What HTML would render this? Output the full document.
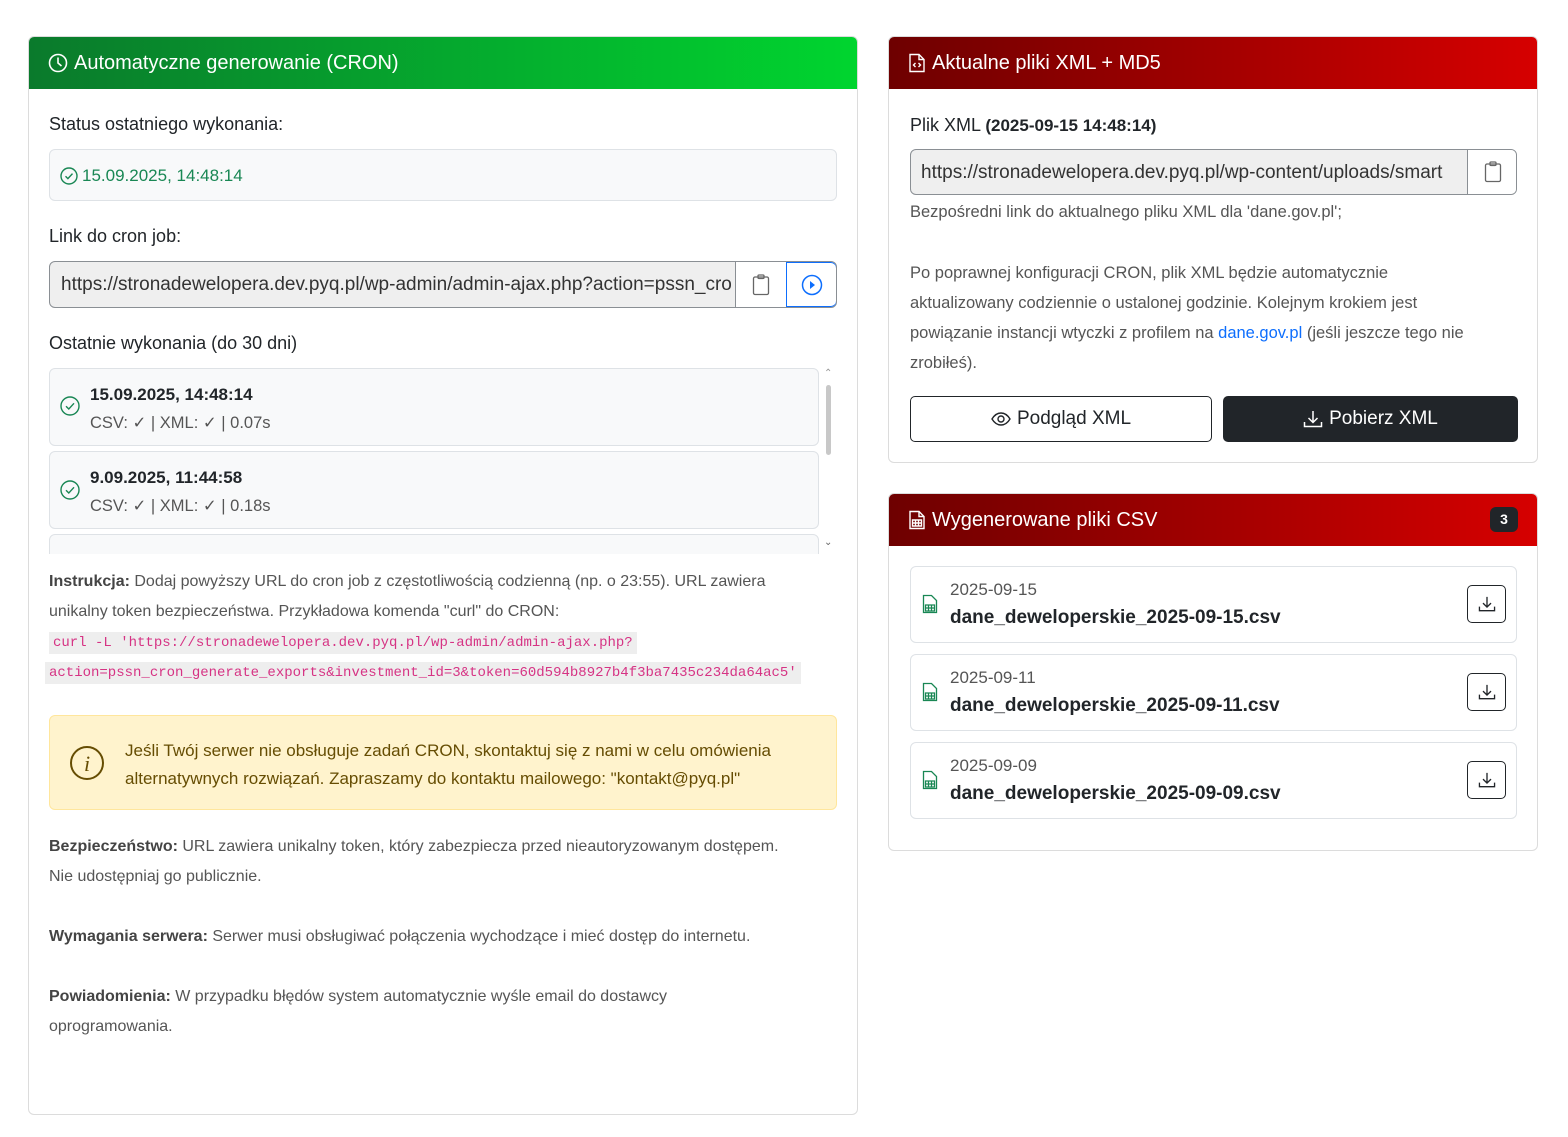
<!DOCTYPE html>
<html><head><meta charset="utf-8"><style>
*{box-sizing:border-box;margin:0;padding:0}
body{width:1568px;height:1137px;background:#fff;font-family:"Liberation Sans",sans-serif;color:#212529;position:relative;overflow:hidden}
.a{position:absolute;white-space:nowrap}
.card{position:absolute;border:1px solid #dcdcdc;border-radius:6px;background:#fff;overflow:hidden}
.hdr{position:absolute;left:0;top:0;right:0;height:52px;color:#fff;font-size:20px;display:flex;align-items:center;padding-left:19px;gap:6px}
.g{background:linear-gradient(90deg,#0a7a2c,#00d52f)}
.r{background:linear-gradient(90deg,#6e0000,#d60000)}
.box{position:absolute;border:1px solid #dee2e6;border-radius:6px;background:#f8f9fa}
.t18{font-size:18px}
.muted{color:#555;font-size:16px}
code{font-family:"Liberation Mono",monospace;color:#d63384;background:#eee;font-size:14px;padding:3px 4px}
.btn{position:absolute;border:1px solid #212529;border-radius:5px;display:flex;align-items:center;justify-content:center;font-size:19px;gap:6px}
</style></head><body>

<!-- LEFT CARD -->
<div class="card" style="left:28px;top:36px;width:830px;height:1079px">
 <div class="hdr g"><svg width="20" height="20" viewBox="0 0 20 20" fill="none" stroke="#fff" stroke-width="1.6"><circle cx="10" cy="10" r="8.5"/><path d="M10 4.5V10l3.5 3"/></svg>Automatyczne generowanie (CRON)</div>
 <div class="a t18" style="left:20px;top:77px">Status ostatniego wykonania:</div>
 <div class="box" style="left:20px;top:112px;width:788px;height:52px"></div>
 <div class="a" style="left:31px;top:129px;color:#198754;font-size:17px;display:flex;align-items:center;gap:4px"><svg width="18" height="18" viewBox="0 0 18 18" fill="none" stroke="#198754" stroke-width="1.4"><circle cx="9" cy="9" r="8"/><path d="M5.5 9.2l2.4 2.4 4.6-5"/></svg>15.09.2025, 14:48:14</div>
 <div class="a t18" style="left:20px;top:189px">Link do cron job:</div>
 <div style="position:absolute;left:20px;top:224px;width:788px;height:47px;border:1px solid #8a8f94;border-radius:6px;background:#efefef;overflow:hidden">
  <div class="a" style="left:11px;top:12px;font-size:19px;color:#333;width:672px;overflow:hidden">https://stronadewelopera.dev.pyq.pl/wp-admin/admin-ajax.php?action=pssn_cron</div>
  <div style="position:absolute;left:685px;top:0;width:51px;height:45px;background:#fff;border-left:1px solid #8a8f94;display:flex;align-items:center;justify-content:center"><svg width="18" height="22" viewBox="0 0 18 22" fill="none" stroke="#666" stroke-width="1.3"><rect x="1.5" y="3" width="15" height="17.5" rx="1.5"/><rect x="6" y="1" width="6" height="3.5" rx="1"/></svg></div>
  <div style="position:absolute;left:736px;top:0;width:51px;height:45px;background:#fff;border:1px solid #0d6efd;border-radius:0 6px 6px 0;display:flex;align-items:center;justify-content:center"><svg width="22" height="22" viewBox="0 0 22 22"><circle cx="11" cy="11" r="9.5" fill="none" stroke="#0d6efd" stroke-width="1.5"/><path d="M9 7l5 4-5 4z" fill="#0d6efd"/></svg></div>
 </div>
 <div class="a t18" style="left:20px;top:296px">Ostatnie wykonania (do 30 dni)</div>
 <div style="position:absolute;left:20px;top:330px;width:790px;height:187px;overflow:hidden">
  <div class="box" style="left:0;top:1px;width:770px;height:78px"></div>
  <div class="box" style="left:0;top:84px;width:770px;height:78px"></div>
  <div class="box" style="left:0;top:167px;width:770px;height:78px"></div>
 </div>
 <div style="position:absolute;left:797px;top:348px;width:5px;height:70px;background:#c8c8c8;border-radius:3px"></div>
 <div class="a" style="left:795px;top:331px;font-size:10px;color:#999">&#8963;</div>
 <div class="a" style="left:795px;top:500px;font-size:10px;color:#666">&#8964;</div>
 <svg class="a" style="left:31px;top:359px" width="20" height="20" viewBox="0 0 20 20" fill="none" stroke="#198754" stroke-width="1.4"><circle cx="10" cy="10" r="9"/><path d="M6 10.2l2.8 2.8 5.2-5.7"/></svg>
 <div class="a" style="left:61px;top:348px;font-size:17px;font-weight:bold">15.09.2025, 14:48:14</div>
 <div class="a muted" style="left:61px;top:376px;font-size:16.5px">CSV: ✓ | XML: ✓ | 0.07s</div>
 <svg class="a" style="left:31px;top:443px" width="20" height="20" viewBox="0 0 20 20" fill="none" stroke="#198754" stroke-width="1.4"><circle cx="10" cy="10" r="9"/><path d="M6 10.2l2.8 2.8 5.2-5.7"/></svg>
 <div class="a" style="left:61px;top:431px;font-size:17px;font-weight:bold">9.09.2025, 11:44:58</div>
 <div class="a muted" style="left:61px;top:459px;font-size:16.5px">CSV: ✓ | XML: ✓ | 0.18s</div>

 <div class="a muted" style="left:20px;top:530px;line-height:30px"><b style="color:#444">Instrukcja:</b> Dodaj powyższy URL do cron job z częstotliwością codzienną (np. o 23:55). URL zawiera<br>unikalny token bezpieczeństwa. Przykładowa komenda "curl" do CRON:</div>
 <div class="a" style="left:20px;top:596px"><code>curl -L 'https://stronadewelopera.dev.pyq.pl/wp-admin/admin-ajax.php?</code></div>
 <div class="a" style="left:16px;top:626px"><code style="padding-left:4px">action=pssn_cron_generate_exports&amp;investment_id=3&amp;token=60d594b8927b4f3ba7435c234da64ac5'</code></div>

 <div style="position:absolute;left:20px;top:678px;width:788px;height:95px;background:#fff3cd;border:1px solid #ffe69c;border-radius:6px"></div>
 <svg class="a" style="left:40px;top:708px" width="36" height="36" viewBox="0 0 36 36" fill="none" stroke="#664d03" stroke-width="2"><circle cx="18" cy="18" r="16"/><text x="18" y="26" text-anchor="middle" font-family="Liberation Serif" font-style="italic" font-size="22" fill="#664d03" stroke="none">i</text></svg>
 <div class="a" style="left:96px;top:700px;color:#664d03;font-size:17px;line-height:28px">Jeśli Twój serwer nie obsługuje zadań CRON, skontaktuj się z nami w celu omówienia<br>alternatywnych rozwiązań. Zapraszamy do kontaktu mailowego: "kontakt@pyq.pl"</div>

 <div class="a muted" style="left:20px;top:795px;line-height:30px"><b style="color:#444">Bezpieczeństwo:</b> URL zawiera unikalny token, który zabezpiecza przed nieautoryzowanym dostępem.<br>Nie udostępniaj go publicznie.</div>
 <div class="a muted" style="left:20px;top:885px;line-height:30px"><b style="color:#444">Wymagania serwera:</b> Serwer musi obsługiwać połączenia wychodzące i mieć dostęp do internetu.</div>
 <div class="a muted" style="left:20px;top:945px;line-height:30px"><b style="color:#444">Powiadomienia:</b> W przypadku błędów system automatycznie wyśle email do dostawcy<br>oprogramowania.</div>
</div>

<!-- RIGHT CARD 1 -->
<div class="card" style="left:888px;top:36px;width:650px;height:427px">
 <div class="hdr r"><svg width="18" height="20" viewBox="0 0 18 20" fill="none" stroke="#fff" stroke-width="1.4"><path d="M2 1.5h9l5 5v12h-14z"/><path d="M11 1.5v5h5"/><path d="M7.5 10l-2 2 2 2M10.5 10l2 2-2 2"/></svg>Aktualne pliki XML + MD5</div>
 <div class="a t18" style="left:21px;top:78px">Plik XML <b style="font-size:17px">(2025-09-15 14:48:14)</b></div>
 <div style="position:absolute;left:21px;top:112px;width:607px;height:46px;border:1px solid #8a8f94;border-radius:6px;background:#efefef;overflow:hidden">
  <div class="a" style="left:10px;top:12px;font-size:19px;color:#333;width:544px;overflow:hidden">https://stronadewelopera.dev.pyq.pl/wp-content/uploads/smart</div>
  <div style="position:absolute;left:556px;top:0;width:50px;height:44px;background:#fff;border-left:1px solid #8a8f94;display:flex;align-items:center;justify-content:center"><svg width="18" height="22" viewBox="0 0 18 22" fill="none" stroke="#666" stroke-width="1.3"><rect x="1.5" y="3" width="15" height="17.5" rx="1.5"/><rect x="6" y="1" width="6" height="3.5" rx="1"/></svg></div>
 </div>
 <div class="a muted" style="left:21px;top:166px;font-size:16.5px">Bezpośredni link do aktualnego pliku XML dla 'dane.gov.pl';</div>
 <div class="a muted" style="left:21px;top:221px;line-height:30px;font-size:16.5px">Po poprawnej konfiguracji CRON, plik XML będzie automatycznie<br>aktualizowany codziennie o ustalonej godzinie. Kolejnym krokiem jest<br>powiązanie instancji wtyczki z profilem na <span style="color:#0d6efd">dane.gov.pl</span> (jeśli jeszcze tego nie<br>zrobiłeś).</div>
 <div class="btn" style="left:21px;top:359px;width:302px;height:46px;background:#fff"><svg width="20" height="14" viewBox="0 0 20 14" fill="none" stroke="#212529" stroke-width="1.4"><path d="M1 7C4 2 7 1 10 1s6 1 9 6c-3 5-6 6-9 6s-6-1-9-6z"/><circle cx="10" cy="7" r="3"/></svg>Podgląd XML</div>
 <div class="btn" style="left:334px;top:359px;width:295px;height:46px;background:#212529;color:#fff"><svg width="20" height="18" viewBox="0 0 20 18" fill="none" stroke="#fff" stroke-width="1.5"><path d="M10 1v11M5.5 8l4.5 4.5L14.5 8M1.5 12v4.5h17V12"/></svg>Pobierz XML</div>
</div>

<!-- RIGHT CARD 2 -->
<div class="card" style="left:888px;top:493px;width:650px;height:358px">
 <div class="hdr r"><svg width="18" height="20" viewBox="0 0 18 20" fill="none" stroke="#fff" stroke-width="1.4"><path d="M2 1.5h9l5 5v12h-14z"/><path d="M11 1.5v5h5"/><path d="M4.5 10h9v6h-9zM4.5 13h9M7.5 10v6M10.5 10v6"/></svg>Wygenerowane pliki CSV</div>
 <div class="a" style="left:601px;top:13px;width:28px;height:25px;background:#212529;color:#fff;border-radius:6px;font-size:14px;font-weight:bold;text-align:center;line-height:25px">3</div>
 <div class="box" style="left:21px;top:72px;width:607px;height:77px;background:#fff"></div>
 <div class="box" style="left:21px;top:160px;width:607px;height:77px;background:#fff"></div>
 <div class="box" style="left:21px;top:248px;width:607px;height:77px;background:#fff"></div>
</div>
<div class="a" style="left:0;top:0">
 <svg class="a" style="left:922px;top:594px" width="16" height="20" viewBox="0 0 16 20" fill="none" stroke="#198754" stroke-width="1.3"><path d="M1.5 1.5h8l5 5v12h-13z"/><path d="M3.5 11h9v6h-9zM3.5 14h9M6.5 11v6M9.5 11v6"/></svg>
 <div class="a" style="left:950px;top:580px;font-size:17px;color:#555">2025-09-15</div>
 <div class="a" style="left:950px;top:607px;font-size:19px;font-weight:bold">dane_deweloperskie_2025-09-15.csv</div>
 <div class="a" style="left:1467px;top:585px;width:39px;height:38px;border:1px solid #212529;border-radius:5px;display:flex;align-items:center;justify-content:center"><svg width="18" height="16" viewBox="0 0 20 18" fill="none" stroke="#212529" stroke-width="1.5"><path d="M10 1v11M5.5 8l4.5 4.5L14.5 8M1.5 12v4.5h17V12"/></svg></div>
 <svg class="a" style="left:922px;top:682px" width="16" height="20" viewBox="0 0 16 20" fill="none" stroke="#198754" stroke-width="1.3"><path d="M1.5 1.5h8l5 5v12h-13z"/><path d="M3.5 11h9v6h-9zM3.5 14h9M6.5 11v6M9.5 11v6"/></svg>
 <div class="a" style="left:950px;top:668px;font-size:17px;color:#555">2025-09-11</div>
 <div class="a" style="left:950px;top:695px;font-size:19px;font-weight:bold">dane_deweloperskie_2025-09-11.csv</div>
 <div class="a" style="left:1467px;top:673px;width:39px;height:38px;border:1px solid #212529;border-radius:5px;display:flex;align-items:center;justify-content:center"><svg width="18" height="16" viewBox="0 0 20 18" fill="none" stroke="#212529" stroke-width="1.5"><path d="M10 1v11M5.5 8l4.5 4.5L14.5 8M1.5 12v4.5h17V12"/></svg></div>
 <svg class="a" style="left:922px;top:770px" width="16" height="20" viewBox="0 0 16 20" fill="none" stroke="#198754" stroke-width="1.3"><path d="M1.5 1.5h8l5 5v12h-13z"/><path d="M3.5 11h9v6h-9zM3.5 14h9M6.5 11v6M9.5 11v6"/></svg>
 <div class="a" style="left:950px;top:756px;font-size:17px;color:#555">2025-09-09</div>
 <div class="a" style="left:950px;top:783px;font-size:19px;font-weight:bold">dane_deweloperskie_2025-09-09.csv</div>
 <div class="a" style="left:1467px;top:761px;width:39px;height:38px;border:1px solid #212529;border-radius:5px;display:flex;align-items:center;justify-content:center"><svg width="18" height="16" viewBox="0 0 20 18" fill="none" stroke="#212529" stroke-width="1.5"><path d="M10 1v11M5.5 8l4.5 4.5L14.5 8M1.5 12v4.5h17V12"/></svg></div>
</div>
</body></html>
